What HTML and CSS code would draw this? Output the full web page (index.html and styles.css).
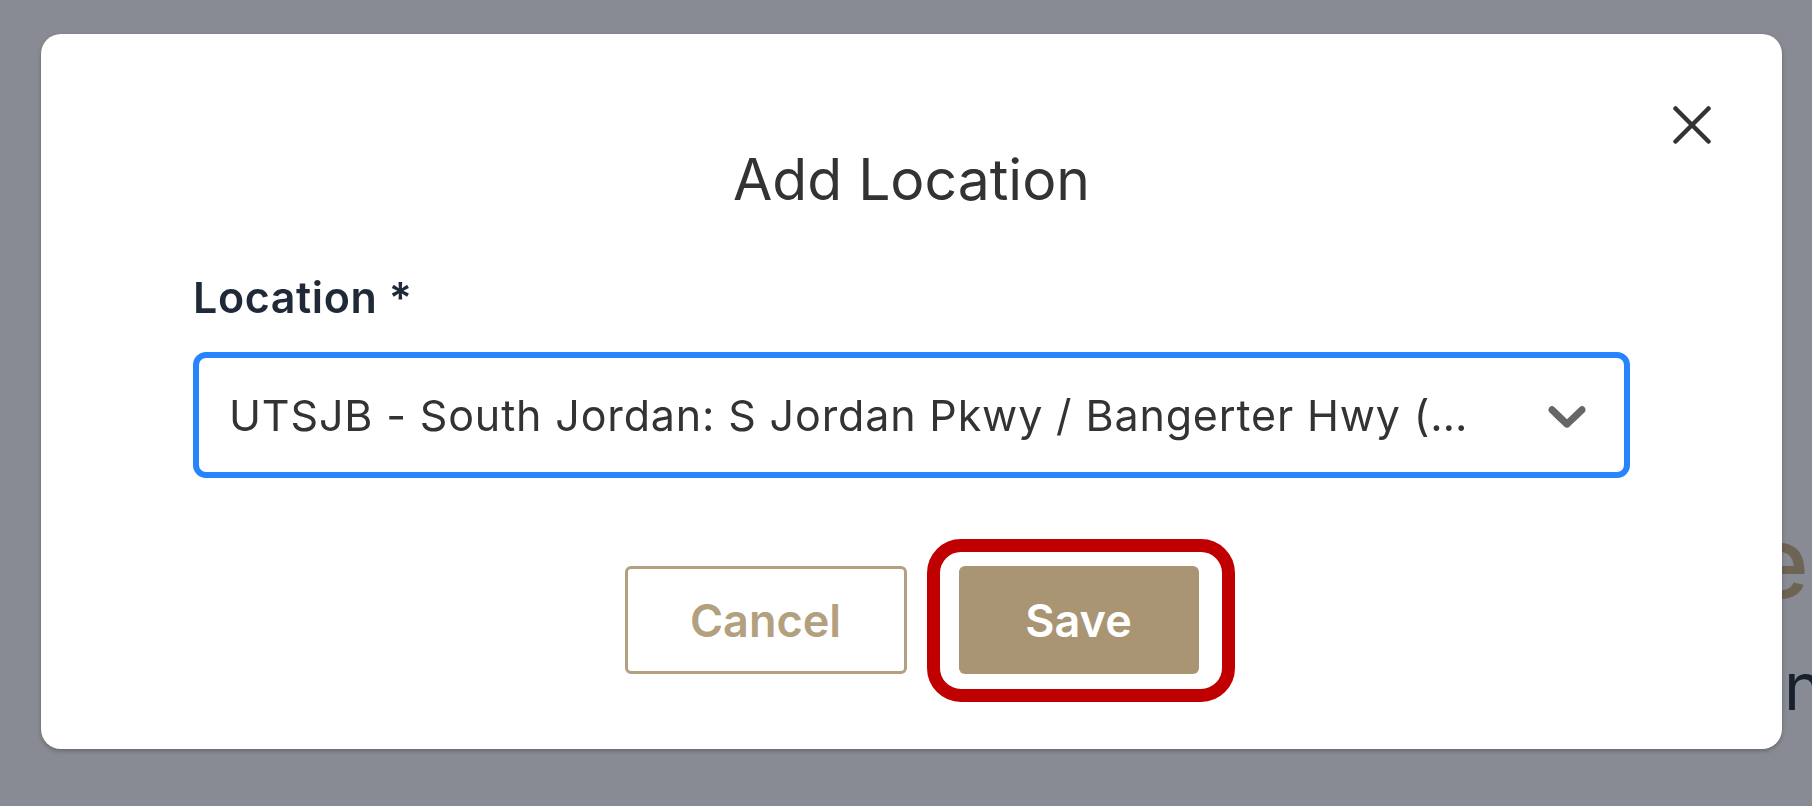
FILE: index.html
```html
<!DOCTYPE html>
<html lang="en">
<head>
<meta charset="utf-8">
<title>Add Location</title>
<link rel="stylesheet" href="styles.css">
</head>
<body>
  <div class="page">
    <div class="page-heading">Schedule</div>
    <div class="page-sub">Location</div>
  </div>
  <div class="overlay">
    <div class="modal">
      <button class="close" aria-label="Close">
        <svg viewBox="0 0 38 38" width="38" height="38"><path d="M2.5 2.5 L35.5 35.5 M35.5 2.5 L2.5 35.5" stroke="#333" stroke-width="4.5" stroke-linecap="round" fill="none"/></svg>
      </button>
      <h2 class="title">Add Location</h2>
      <label class="label">Location *</label>
      <div class="select">
        <span class="value">UTSJB - South Jordan: S Jordan Pkwy / Bangerter Hwy (…</span>
        <svg class="chev" viewBox="0 0 20 20" width="64" height="64"><path d="M4.516 7.548c0.436-0.446 1.043-0.481 1.576 0l3.908 3.747 3.908-3.747c0.533-0.481 1.141-0.446 1.574 0 0.436 0.445 0.408 1.197 0 1.615-0.406 0.418-4.695 4.502-4.695 4.502-0.217 0.223-0.502 0.335-0.787 0.335s-0.57-0.112-0.789-0.335c0 0-4.287-4.084-4.695-4.502s-0.436-1.17 0-1.615z" fill="#666"/></svg>
      </div>
      <div class="actions">
        <button class="btn btn-outline">Cancel</button>
        <button class="btn btn-primary highlight">Save</button>
      </div>
    </div>
  </div>
</body>
</html>
```

FILE: styles.css
```css
html, body {
  margin: 0;
  padding: 0;
}
body {
  width: 1812px;
  height: 806px;
  overflow: hidden;
  background: #ffffff;
  font-family: "Inter", "Noto Sans", sans-serif;
}
.page {
  display: flex;
  flex-direction: column;
  align-items: flex-end;
  padding: 502px 3px 0 0;
  white-space: nowrap;
}
.page-heading {
  font-size: 100px;
  line-height: 120px;
  font-weight: 500;
  color: #cbb083;
}
.page-sub {
  margin-top: 24px;
  margin-right: -14px;
  font-size: 66px;
  line-height: 80px;
  color: #1f2937;
}
.overlay {
  position: fixed;
  inset: 0;
  background: rgba(17, 24, 39, 0.5);
  display: flex;
  align-items: flex-start;
  padding: 34px 0 0 41px;
}
.modal {
  position: relative;
  box-sizing: border-box;
  width: 1741px;
  height: 715px;
  background: #ffffff;
  border-radius: 20px;
  box-shadow: 0 2px 4px rgba(0, 0, 0, 0.25);
  padding: 111px 152px 0;
  display: flex;
  flex-direction: column;
}
.close {
  position: absolute;
  top: 72px;
  right: 71px;
  width: 38px;
  height: 38px;
  padding: 0;
  border: 0;
  background: none;
  display: flex;
}
.title {
  margin: 0;
  font-size: 57px;
  line-height: 70px;
  font-weight: 400;
  text-align: center;
  color: #333333;
}
.label {
  margin-top: 56px;
  font-size: 43px;
  line-height: 52px;
  font-weight: 600;
  letter-spacing: 0.6px;
  color: #1f2937;
}
.select {
  margin-top: 29px;
  box-sizing: border-box;
  height: 126px;
  border: 6px solid #2684ff;
  border-radius: 13px;
  display: flex;
  align-items: center;
  padding: 0 25px 0 30px;
  gap: 20px;
}
.value {
  flex: 1;
  min-width: 0;
  white-space: nowrap;
  overflow: hidden;
  font-size: 43px;
  letter-spacing: 0.85px;
  color: #333333;
}
.chev {
  flex: none;
}
.actions {
  margin-top: 88px;
  display: flex;
  justify-content: center;
  gap: 52px;
}
.btn {
  box-sizing: border-box;
  height: 108px;
  font-family: inherit;
  font-size: 45px;
  font-weight: 600;
  border-radius: 6px;
  padding: 0;
  cursor: pointer;
}
.btn-outline {
  width: 282px;
  background: #ffffff;
  border: 3px solid #b3a07f;
  color: #b3a07f;
}
.btn-primary {
  width: 240px;
  background: #a99574;
  border: 0;
  color: #ffffff;
}
.highlight {
  position: relative;
}
.highlight::after {
  content: "";
  position: absolute;
  left: -32px;
  right: -36px;
  top: -27px;
  bottom: -28px;
  border: 13px solid #c00000;
  border-radius: 34px;
}
```
